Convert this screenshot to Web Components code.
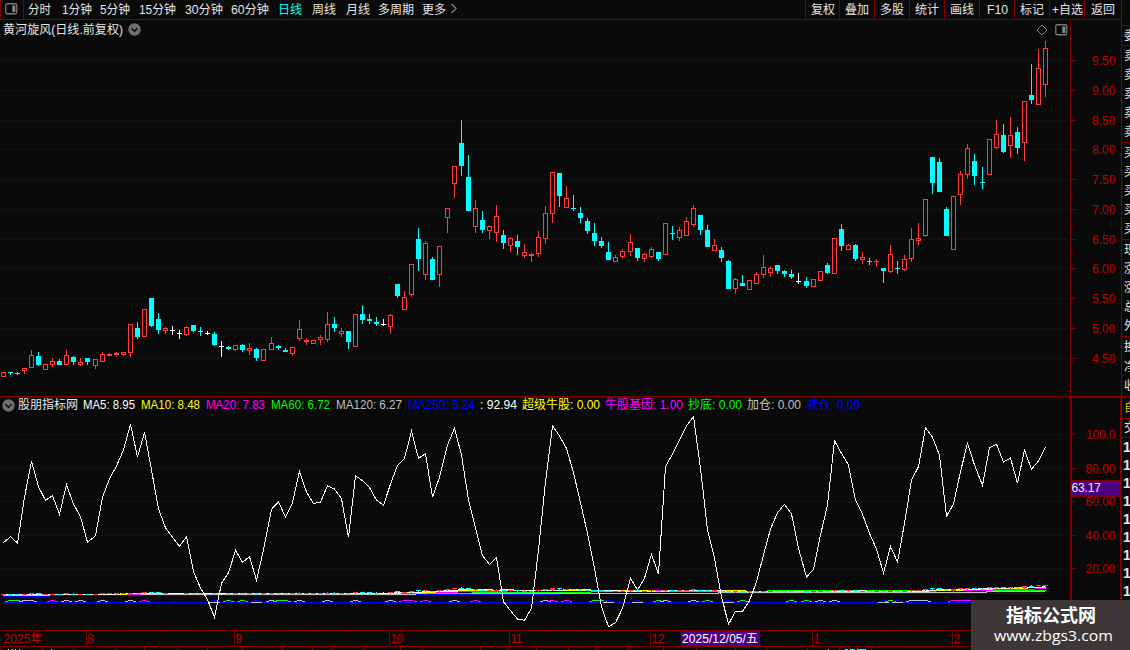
<!DOCTYPE html>
<html lang="zh-CN">
<head>
<meta charset="utf-8">
<title>黄河旋风 日线</title>
<style>
html,body{margin:0;padding:0;background:#0a0a0a;overflow:hidden}
body{width:1130px;height:650px;font:12px "Liberation Sans","Noto Sans CJK SC",sans-serif;color:#e6e6e6}
</style>
</head>
<body>
<trade-terminal></trade-terminal>
<script>
const LINE = '#800000', UP = '#ff3c3c', DOWN = '#00ffff';

// x, high, body top, body bottom, low, colour (r rising, c falling, w flat)
const CANDLES = `3 372 372 377 377 r;10 372 372 373 375 c;17 372 373 374 375 c;24 368 368 371 374 r;31 350 355 368 368 r;38 352 356 365 366 c;45 364 364 370 370 r;52 358 361 365 367 r;59 359 361 365 365 c;66 350 355 365 365 r;73 356 357 362 365 c;80 358 362 365 366 r;87 358 358 362 365 c;95 359 359 366 369 r;102 352 354 362 362 r;109 353 354 356 356 r;116 352 353 355 357 r;123 352 352 355 356 r;130 324 324 353 357 r;137 322 328 337 339 c;144 309 309 337 337 r;151 298 298 326 327 c;158 313 319 330 334 c;165 327 328 331 334 r;172 326 330 331 335 w;179 330 333 334 339 w;186 326 327 335 336 r;193 325 325 331 332 c;200 327 331 332 336 c;207 331 333 334 335 w;214 332 334 345 346 c;221 341 346 347 357 w;228 346 347 349 350 c;235 345 345 350 351 r;242 344 345 350 352 c;249 343 348 351 355 r;256 348 349 358 361 c;263 349 349 361 361 r;271 337 343 350 350 r;278 345 346 348 350 c;285 348 350 352 352 c;292 347 347 354 356 r;299 320 329 339 341 r;306 338 340 342 345 r;313 340 340 344 344 r;320 335 337 340 345 r;327 312 324 340 342 r;334 317 324 328 332 c;341 328 331 334 337 r;348 331 331 342 349 c;355 314 314 347 347 r;362 305 314 320 324 c;369 314 319 321 324 c;376 317 322 324 326 c;383 319 324 325 326 w;390 314 315 327 334 r;397 284 284 296 298 c;404 291 297 310 310 r;411 264 264 295 297 r;418 228 239 259 271 c;425 241 243 275 280 r;432 257 259 280 280 c;439 246 246 275 287 r;447 208 208 218 233 r;454 166 166 184 198 r;461 120 143 166 176 c;468 155 177 211 211 c;475 200 208 227 233 r;482 211 220 230 233 c;489 225 226 231 239 r;496 205 216 233 242 r;503 230 235 243 249 c;510 237 238 246 252 r;517 235 241 247 255 c;524 244 252 256 258 r;531 253 254 256 262 r;538 231 237 254 257 r;545 206 213 239 244 r;552 172 172 214 223 r;559 173 173 196 207 c;566 186 198 208 208 r;573 195 208 209 211 c;580 207 213 218 223 c;587 218 221 231 234 c;594 223 233 241 246 c;601 237 241 246 248 c;608 242 252 260 260 c;615 255 257 262 262 r;622 249 251 257 258 r;630 234 242 252 256 r;637 248 248 258 261 c;644 253 254 259 262 r;651 247 249 257 258 r;658 252 252 259 261 c;665 223 223 255 255 r;672 226 233 234 240 c;679 227 230 238 241 r;686 217 221 236 236 r;693 205 208 225 227 r;700 215 215 230 235 c;707 225 230 247 247 c;714 239 245 251 251 r;721 247 250 258 262 c;728 260 261 289 289 c;735 278 279 289 294 r;742 275 283 286 286 c;749 280 280 290 290 r;756 272 274 284 284 r;763 255 267 275 278 r;770 266 268 273 277 r;777 265 265 271 274 c;784 270 271 274 277 c;791 270 274 277 279 c;798 273 281 282 284 w;806 277 281 286 288 c;813 279 279 287 287 r;820 271 271 281 281 r;827 263 265 273 274 c;834 238 238 274 274 r;841 224 229 246 251 c;848 244 245 250 250 r;855 244 245 259 261 c;862 252 257 260 264 r;869 258 261 262 265 c;876 259 261 262 267 r;883 268 268 271 283 c;890 245 254 272 273 r;897 261 268 269 274 c;904 255 259 270 271 r;911 228 239 259 262 r;918 223 238 241 245 r;925 199 199 236 237 r;932 157 157 183 194 c;939 158 162 192 192 c;946 207 209 236 236 c;953 196 196 250 250 r;960 171 174 195 205 r;967 144 148 175 179 r;974 154 161 176 185 c;982 167 182 183 189 c;989 139 139 175 175 r;996 120 134 148 149 r;1003 124 135 152 153 c;1010 117 135 146 158 r;1017 127 132 148 154 c;1024 101 101 143 161 r;1031 64 95 100 104 c;1038 49 68 105 105 r;1045 41 48 85 97 r`
  .split(';').map(s => { const p = s.split(' '); return { x:+p[0], h:+p[1], t:+p[2], b:+p[3], l:+p[4], k:p[5] }; });

// oscillator heights, one per candle, in thirds of a pixel under y=390
const WAVE = [458,440,459,322,214,290,331,317,373,284,342,380,457,437,322,266,228,180,103,202,127,240,357,413,442,469,440,545,594,629,682,580,548,481,517,500,571,480,358,335,382,338,244,306,341,336,287,297,326,442,257,272,293,330,346,282,226,205,124,205,191,322,262,165,115,195,330,413,497,523,502,635,662,687,691,655,480,275,107,138,175,248,338,430,535,650,710,698,655,565,600,565,493,553,230,192,150,107,80,235,420,505,620,703,664,664,632,575,495,417,368,343,372,475,561,538,435,345,152,190,225,330,373,430,478,549,470,516,400,270,230,113,142,196,379,342,245,160,225,286,173,163,216,204,280,180,238,213,172];

const MARKS = 'g10-17 s24-31 m52 s66 s80 s102 s130 m144 b214 g228 g242 b256 s271 g278-285 s299 s327 s355 s390 m404-411 m425 s454 m475 s545 m552 m566 g594-601 b608 b637 g658 s665 s693 g707 b728 g742 g791 g806 s820 s834 b883 g890 b897 s911-925 m953-975';

const rect = (x, y, w, h, f) => `<rect x="${x}" y="${y}" width="${w}" height="${h}" fill="${f}"/>`;
const grid = ys => ys.map(y => `<path d="M1 ${y}.5H1067" stroke="#680606" stroke-dasharray="1 3"/>`).join('');
const CHEVRON = `<svg width="13" height="13" viewBox="0 0 13 13"><circle cx="6.5" cy="6.5" r="6.2" fill="#707070"/><path d="M3.5 5.2l3 3 3-3" fill="none" stroke="#0a0a0a" stroke-width="1.5"/></svg>`;
const PANE = `<svg width="13" height="12" viewBox="0 0 13 12"><rect x=".75" y=".75" width="11" height="10" rx="1.5" fill="none" stroke="#777" stroke-width="1.3"/><rect x="7.3" y="2.5" width="3" height="6.5" fill="#888"/></svg>`;

function define(name, render) {
  customElements.define(name, class extends HTMLElement {
    connectedCallback() {
      if (!this.shadowRoot) this.attachShadow({ mode: 'open' }).innerHTML = render(this);
    }
  });
}

// a label whose advance is fixed to the given width
define('fit-text', el => {
  const w = +el.getAttribute('w'), s = +(el.getAttribute('size') || 12), h = Math.round(s * 1.34);
  return `<style>:host{display:block;flex:none;width:${w}px;height:${h}px}svg{display:block;overflow:visible}</style>
  <svg width="${w}" height="${h}"><text x="0" y="${Math.round(s * 1.03)}" font-size="${s}" fill="currentColor" textLength="${w}" lengthAdjust="spacingAndGlyphs">${el.getAttribute('t')}</text></svg>`;
});

define('period-tabs', () => {
  const tabs = [['分时',34],['1分钟',38],['5分钟',39],['15分钟',46],['30分钟',46],['60分钟',47],['日线',34],['周线',34],['月线',32],['多周期',44],['更多',28]];
  const wid = [23,30,30,37,38,38,24,24,24,36,24];
  return `<style>:host{display:flex;align-items:center;height:19px}
  .icon{box-sizing:border-box;width:24px;height:19px;padding:3px 0 0 4px;border-right:1px solid ${LINE};border-left:1px solid ${LINE};margin-right:4px}
  .icon svg{display:block}.on{color:#00ffff}div{flex:none}</style>
  <div class="icon">${PANE}</div>` + tabs.map(([t,w],i) =>
    `<div class="${t==='日线'?'on':''}" style="width:${w}px"><fit-text w="${wid[i]}" t="${t}"></fit-text></div>`).join('') +
  `<svg width="8" height="11" viewBox="0 0 8 11" style="margin-top:-2px"><path d="M1.5 1l4.5 4.5L1.5 10" fill="none" stroke="#ddd"/></svg>`;
});

define('tool-buttons', () => {
  const b = [['复权',24,34],['叠加',24,35],['多股',24,35],['统计',24,35],['画线',24,35],['F10',21,35],['标记',24,35],['+自选',31,35],['返回',24,37]];
  return `<style>:host{display:flex;height:19px}div{box-sizing:border-box;display:flex;align-items:center;justify-content:center;border-left:1px solid ${LINE}}</style>` +
    b.map(([t,w,c]) => `<div style="width:${c}px"><fit-text w="${w}" t="${t}"></fit-text></div>`).join('');
});

define('top-bar', () => `<style>:host{box-sizing:border-box;display:flex;justify-content:space-between;height:20px;border-bottom:1px solid ${LINE}}</style><period-tabs></period-tabs><tool-buttons></tool-buttons>`);

define('price-chart', () => {
  const bars = CANDLES.map(c => {
    if (c.k === 'r') {
      let s = '';
      if (c.h < c.t) s += rect(c.x, c.h, 1, c.t - c.h, UP);
      if (c.l > c.b) s += rect(c.x, c.b, 1, c.l - c.b, UP);
      return s + (c.b - c.t < 3 ? rect(c.x-2, c.t, 5, c.b - c.t, UP)
        : `<rect x="${c.x-1.5}" y="${c.t+.5}" width="4" height="${c.b-c.t-1}" fill="none" stroke="${UP}"/>`);
    }
    const f = c.k === 'c' ? DOWN : '#fff';
    return rect(c.x, c.h, 1, c.l - c.h, f) + rect(c.x-2, c.t, 5, c.b - c.t, f);
  }).join('');
  return `<style>:host{display:grid;width:1070px;height:376px}svg,header{grid-area:1/1}
  header{z-index:1;display:flex;align-items:center;height:19px;padding:0 2px 0 3px}header svg{flex:none}.sp{flex:1}</style>
  <header><fit-text w="120" t="黄河旋风(日线.前复权)"></fit-text><span style="width:5px"></span>${CHEVRON}<span class="sp"></span>
  <svg width="12" height="12" viewBox="0 0 12 12" style="margin-right:7px"><path d="M6 1l5 5-5 5-5-5z" fill="none" stroke="#888"/></svg>${PANE}</header>
  <svg width="1070" height="376" viewBox="0 20 1070 376" shape-rendering="crispEdges">${grid([60,90,120,149,179,209,239,268,298,328,358])}${bars}</svg>`;
});

define('price-scale', () => {
  const ys = [60,90,120,149,179,209,239,268,298,328,358];
  const mid = [75,105,135,164,194,224,254,283,313,343];
  return `<style>:host{display:block;width:51px;height:376px}svg{display:block}</style>
  <svg width="51" height="376" viewBox="1070 20 51 376"><g shape-rendering="crispEdges">${rect(1070,20,1,376,LINE)}
  ${ys.map(y => rect(1071,y,5,1,LINE)).join('')}${mid.map(y => rect(1071,y,2,1,LINE)).join('')}</g>
  ${ys.map((y,i) => `<text x="1092" y="${y+5}" font-size="12" fill="#c00000" textLength="23.5">${(9.5 - i*.5).toFixed(2)}</text>`).join('')}</svg>`;
});

define('indicator-legend', () => {
  const L = [['股朋指标网',60,5,'#e6e6e6'],['MA5: 8.95',52,6,'#ffffff'],['MA10: 8.48',59,6,'#ffff00'],['MA20: 7.83',59,6,'#ff00ff'],['MA60: 6.72',59,6,'#00ff00'],['MA120: 6.27',66,6,'#c0c0c0'],['MA250: 5.24',67,5,'#0000ff'],[': 92.94',37,5,'#ffffff'],['超级牛股: 0.00',78,5,'#ffff00'],['牛股基因: 1.00',78,5,'#ff00ff'],['抄底: 0.00',54,5,'#00ff00'],['加仓: 0.00',54,5,'#c0c0c0'],['减仓: 0.00',54,0,'#0000ff']];
  return `<style>:host{display:flex;align-items:center;height:16px;padding-left:2px}svg{flex:none;margin-right:3px}</style>${CHEVRON}` +
    L.map(([t,w,g,c]) => `<fit-text w="${w}" t="${t}" style="color:${c};margin-right:${g}px"></fit-text>`).join('');
});

define('indicator-chart', () => {
  const toY = p => 601.6 - p * 1.675, price = y => 4.5 + (358.5 - y) / 59.6;
  const closes = CANDLES.map(c => price(c.k === 'r' ? c.t : c.b));
  const avg = n => closes.map((_, i) => { let s = 0; for (let j = 0; j < n; j++) s += closes[i-j] ?? 4.3; return s / n; });
  const line = (a, f, from = 0) => `<polyline fill="none" stroke="${f}" points="${a.map((v,i) => (CANDLES[i].x+.5) + ',' + (Math.floor(toY(v))+.5)).slice(from).join(' ')}"/>`;
  const minis = CANDLES.map(c => {
    const f = c.k === 'r' ? UP : c.k === 'c' ? DOWN : '#fff', q = y => Math.floor(toY(price(y)));
    return rect(c.x, q(c.h), 1, q(c.l) - q(c.h) + 1, f) + rect(c.x-2, q(c.t), 5, Math.max(1, q(c.b) - q(c.t)), f);
  }).join('');
  const col = { g:'#00ff00', s:'#c0c0c0', m:'#ff00ff', b:'#0000ff' };
  const marks = MARKS.split(' ').map(m => {
    const k = m[0], f = col[k], [a, b = a] = m.slice(1).split('-').map(Number);
    return (k === 'b' ? rect(a-5,602,11,1,'#c0c0c0') : '') + rect(a-5,601,3,1,f) + rect(a-2,600,b-a+5,1,f) + rect(b+3,601,3,1,f);
  }).join('');
  const wave = WAVE.map((v,i) => (CANDLES[i].x+.5) + ',' + (390 + v/3).toFixed(1)).join(' ');
  return `<style>:host{box-sizing:border-box;display:grid;width:1070px;height:234px;border-top:1px solid ${LINE}}svg,indicator-legend{grid-area:1/1}indicator-legend{z-index:1}svg{display:block}</style>
  <indicator-legend></indicator-legend>
  <svg width="1070" height="233" viewBox="0 397 1070 233" shape-rendering="crispEdges">${grid([434,468,501,535,568])}
  <path d="M3 596.5H49V595.5H415V594.5H560V593.5H1045" fill="none" stroke="#00f"/><path d="M3 595.5H49V594.5H415V593.5H718V592.5H986V591.5H1045" fill="none" stroke="#c0c0c0"/>
  ${line(avg(60),'#00ff00',60)}${line(avg(20),'#ff00ff')}${line(avg(10),'#ffff00')}${line(avg(5),'#ffffff')}${minis}
  ${rect(3,602,1042,1,'#0000ff')}${marks}
  <polyline points="${wave}" fill="none" stroke="#fff"/></svg>`;
});

define('indicator-scale', () => {
  const ys = [434,468,501,535,568], t = ['100.0','80.00','60.00','40.00','20.00'];
  return `<style>:host{display:block;width:51px;height:234px}svg{display:block}</style>
  <svg width="51" height="234" viewBox="1070 396 51 234"><g shape-rendering="crispEdges">${rect(1070,396,2,234,LINE)}${rect(1070,396,51,2,LINE)}${rect(1120,396,1,234,LINE)}
  ${ys.map(y => rect(1072,y,4,1,LINE)).join('')}${[451,518,552].map(y => rect(1072,y,1,1,LINE)).join('')}</g>
  ${ys.map((y,i) => `<text x="${i?1085.5:1086}" y="${y+5}" font-size="12" fill="#c00000" textLength="${i?30:29.5}">${t[i]}</text>`).join('')}
  <g shape-rendering="crispEdges">${rect(1071,480,50,17,LINE)}${rect(1072,481,48,15,'#4b0082')}</g>
  <text x="1071.5" y="492" font-size="12" fill="#f0f0f0" textLength="29.5">63.17</text></svg>`;
});

define('time-axis', () => {
  const major = [[86,'8',6.5],[234,'9',6.5],[389,'10',13],[509,'11',12],[650,'12',13],[812,'1',6],[952,'2',6.5]];
  const minor = [123,160,197,273,312,350,419,449,479,544,580,615,772,847,882,917,987];
  return `<style>:host{display:block;height:16px}svg{display:block}</style><svg width="1121" height="16" viewBox="0 630 1121 16">
  <g shape-rendering="crispEdges">${rect(0,630,1121,1,LINE)}${major.map(m => rect(m[0],631,1,15,LINE)).join('')}${minor.map(x => rect(x,631,1,2,LINE)).join('')}${rect(681,631,79,15,'#4b0082')}</g>
  <g font-size="12" fill="#c00000"><text x="3.5" y="643" textLength="39">2025年</text>${major.map(m => `<text x="${m[0]+1.5}" y="643" textLength="${m[2]}">${m[1]}</text>`).join('')}
  <text x="682" y="642.5" fill="#fff" textLength="76">2025/12/05/五</text></g></svg>`;
});

define('bottom-tabs', () => {
  const t = [0,42,73,115,144,177,207,242,282,312,332,364,400,422,480,508,536,568,596,628,663,696,735,766,807,839,871];
  return `<style>:host{display:block;height:4px}svg{display:block}</style><svg width="1121" height="4" viewBox="0 646 1121 4" shape-rendering="crispEdges">
  ${rect(0,646,1121,1,LINE)}${t.map(x => rect(x,647,1,3,LINE)).join('')}${[8,12,15,19,51,828].map(x => rect(x,649,1,1,'#ddd')).join('')}${rect(845,649,3,1,DOWN)}${rect(850,649,5,1,DOWN)}${rect(857,649,9,1,DOWN)}</svg>`;
});

define('quote-strip', () => {
  const groups = [[20,'委'],[97,'卖卖卖卖卖'],[97,'买买买买买'],[97,'现涨涨总外'],[60,'换净收'],[22,'自','#c8c800'],[19,'交'],[163,'111111111']];
  return `<style>:host{box-sizing:border-box;display:flex;flex-direction:column;width:9px;height:650px;overflow:hidden;border-left:1px solid ${LINE};padding-top:25px}
  section{box-sizing:border-box;flex:none;display:flex;flex-direction:column;border-top:1px solid ${LINE};padding-left:2px;line-height:1}
  span{flex:1;display:flex;align-items:center;white-space:nowrap;font-size:12px}section:last-child{font-weight:700;padding-left:1px}section:last-child span{font-size:14px}</style>` +
   groups.map(([h,s,c]) => `<section style="height:${h}px;color:${c||'#e6e6e6'}">${[...s].map(ch => `<span>${ch}</span>`).join('')}</section>`).join('');
});

define('site-badge', () => `<style>:host{position:absolute;right:0;bottom:0;box-sizing:border-box;display:flex;flex-direction:column;align-items:center;width:159px;height:50px;padding-top:3px;background:#3d3738;color:#fff}
  .n{font-family:"Noto Sans CJK SC",sans-serif;font-weight:700}.u{font-family:"Open Sans","Noto Sans",sans-serif;margin:-1px 0 0 5px}</style>
  <fit-text class="n" w="90" size="18" t="指标公式网"></fit-text><fit-text class="u" w="119" size="15" t="www.zbgs3.com"></fit-text>`);

define('trade-terminal', () => `<style>:host{position:relative;display:flex;width:1130px;height:650px;background:#0a0a0a}main{width:1121px;display:flex;flex-direction:column}.row{display:flex}</style>
  <main><top-bar></top-bar><div class="row"><price-chart></price-chart><price-scale></price-scale></div>
  <div class="row"><indicator-chart></indicator-chart><indicator-scale></indicator-scale></div><time-axis></time-axis><bottom-tabs></bottom-tabs></main>
  <quote-strip></quote-strip><site-badge></site-badge>`);
</script>
</body>
</html>
